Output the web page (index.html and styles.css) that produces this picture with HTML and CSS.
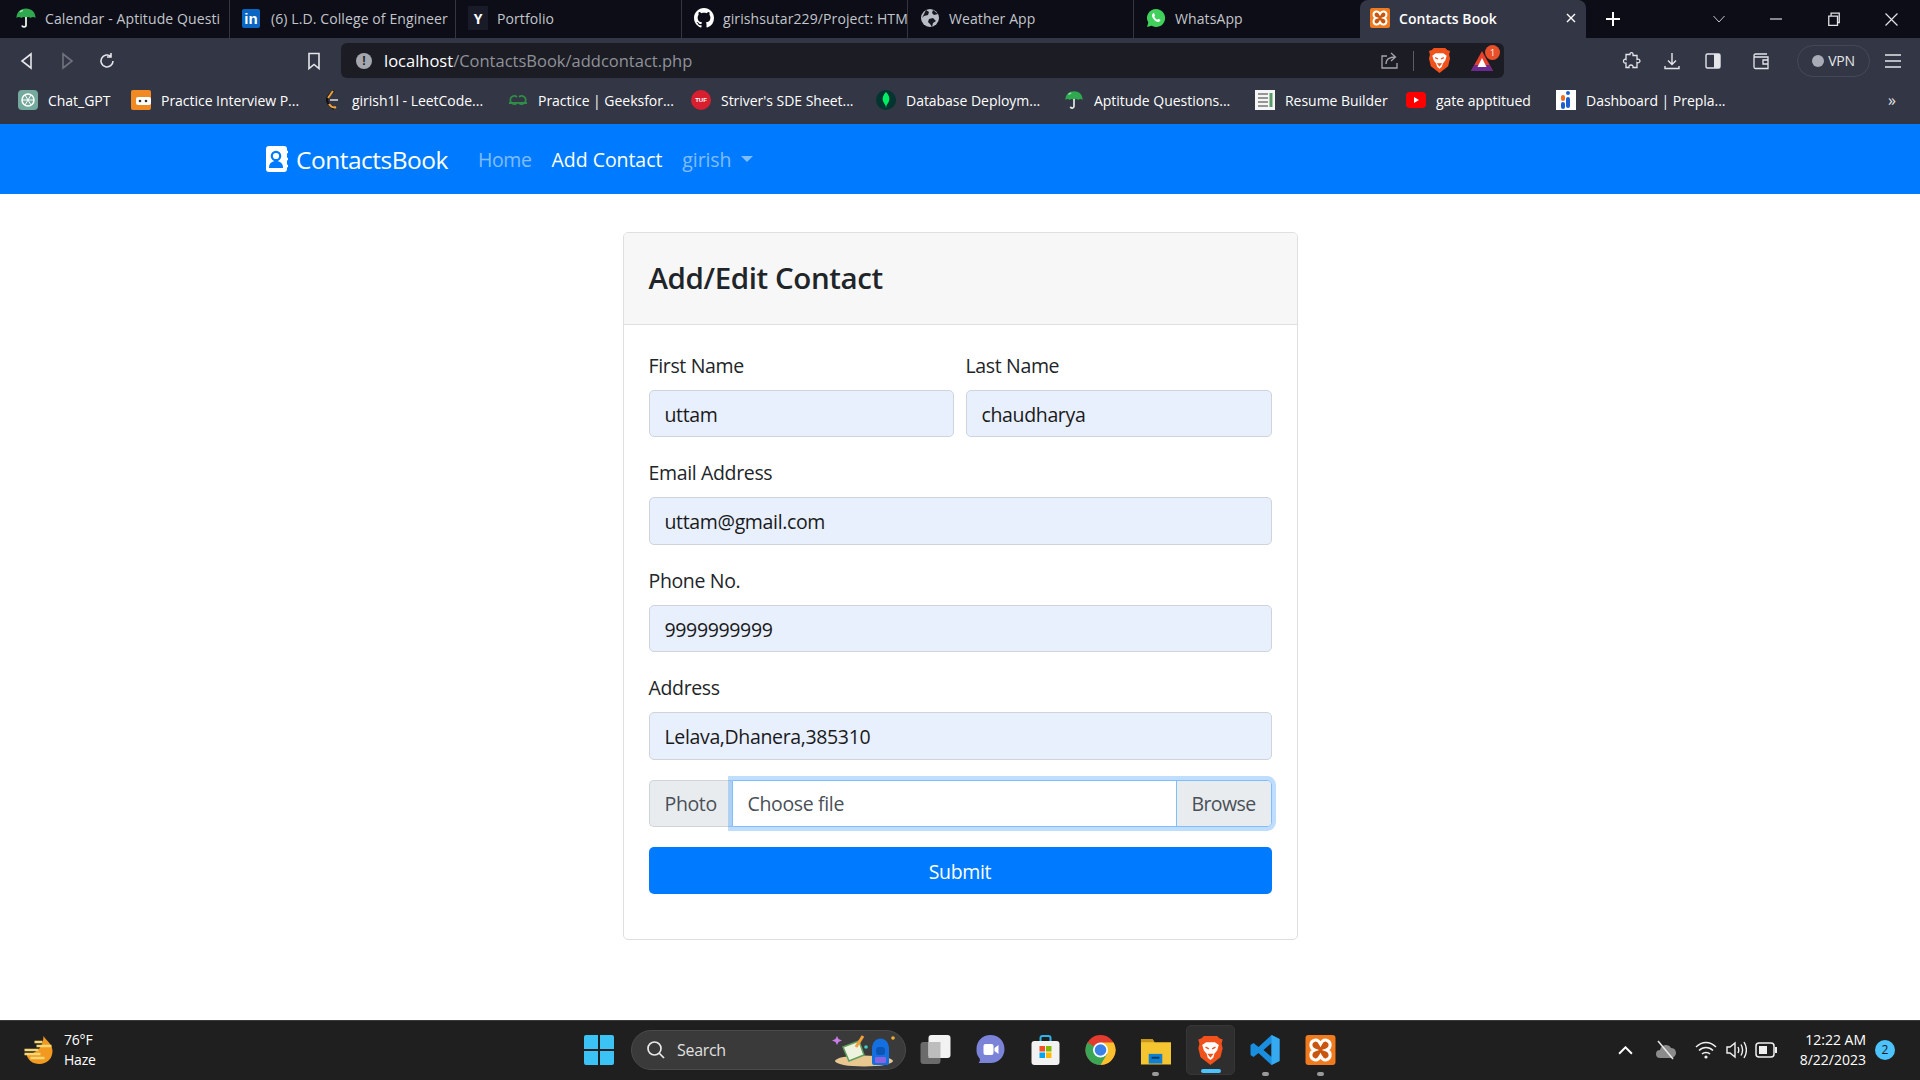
FILE: index.html
```html
<!DOCTYPE html>
<html lang="en">
<head>
<meta charset="utf-8">
<title>Contacts Book</title>
<link rel="stylesheet" href="styles.css">
</head>
<body>
<svg class="defs" aria-hidden="true">
  <symbol id="umbrella" viewBox="0 0 20 22"><path d="M.5 11C.5 5 4.500 1.500 10 1.500S19.500 5 19.500 11c-1.500-1.500-3.500-1.500-4.800 0-1.300-1.500-3.300-1.500-4.700 0-1.400-1.500-3.400-1.500-4.700 0-1.300-1.500-3.300-1.500-4.800 0z" fill="#2fa84f"/><path d="M4 5c1-1 2-1.500 3-1.500" fill="none" stroke="#a8e6b4" stroke-width="1.500"/><path d="M10 10v8c0 2.500-3.500 2.500-4 .5" fill="none" stroke="#e6f2e6" stroke-width="1.800"/></symbol>
  <symbol id="xampp" viewBox="0 0 20 20"><rect width="20" height="20" rx="2" fill="#f07a1e"/><path d="M6 3.500c2-.5 3 .5 4 2.500 1-2 2-3 4-2.500 3.500 1 3 5.500 0 6.500 3 1 3.500 5.500 0 6.500-2 .5-3-.5-4-2.500-1 2-2 3-4 2.500-3.500-1-3-5.500 0-6.500-3-1-3.500-5.500 0-6.500z" fill="#c9560f" stroke="#fff" stroke-width="2"/></symbol>
  <symbol id="brave" viewBox="0 0 24 28"><path d="M6 1h12l2 2 3 1-1 4 1 4-2 8-9 7-9-7-2-8 1-4-1-4 3-1z" fill="#f1511b"/><path d="M4.500 9L8 6.500h8L19.500 9 18 14l-2.500 3-1 3.500-2.500 2-2.500-2-1-3.500L6 14z" fill="#fff"/><path d="M7.500 11l3 1.500M16.500 11l-3 1.500M10.500 17.500h3l-1.500 2z" fill="#f1511b" stroke="#f1511b" stroke-width="1.300"/></symbol>
</svg>

<div class="tabbar">
  <div class="tab sep"><svg class="ticon"><use href="#umbrella"/></svg><span class="ttext">Calendar - Aptitude Questi</span></div>
  <div class="tab sep"><span class="linkedin">in</span><span class="ttext">(6) L.D. College of Engineer</span></div>
  <div class="tab sep"><span class="ylogo">Y</span><span class="ttext">Portfolio</span></div>
  <div class="tab sep"><svg class="ticon" viewBox="0 0 16 16"><path fill="#fff" d="M8 0C3.58 0 0 3.58 0 8c0 3.54 2.29 6.53 5.47 7.59.4.07.55-.17.55-.38 0-.19-.01-.82-.01-1.49-2.01.37-2.53-.49-2.69-.94-.09-.23-.48-.94-.82-1.13-.28-.15-.68-.52-.01-.53.63-.01 1.08.58 1.23.82.72 1.21 1.87.87 2.33.66.07-.52.28-.87.51-1.07-1.78-.2-3.64-.89-3.64-3.95 0-.87.31-1.59.82-2.15-.08-.2-.36-1.02.08-2.12 0 0 .67-.21 2.2.82.64-.18 1.32-.27 2-.27s1.36.09 2 .27c1.53-1.04 2.2-.82 2.2-.82.44 1.1.16 1.92.08 2.12.51.56.82 1.27.82 2.15 0 3.07-1.87 3.75-3.65 3.95.29.25.54.73.54 1.48 0 1.07-.01 1.93-.01 2.2 0 .21.15.46.55.38A8.01 8.01 0 0 0 16 8c0-4.42-3.58-8-8-8z"/></svg><span class="ttext">girishsutar229/Project: HTM</span></div>
  <div class="tab sep"><svg class="ticon" viewBox="0 0 20 20"><circle cx="10" cy="10" r="9" fill="#b8bcc4"/><path d="M6 2l3 2-1 3-4 1-2 2M12 19l1-4 3-2-3-3-4 1-1 3 2 2zM13 2l-1 3 2 2 4-1" fill="#16171f"/></svg><span class="ttext">Weather App</span></div>
  <div class="tab"><svg class="ticon wa" viewBox="0 0 20 20"><path d="M10 1a9 9 0 0 0-7.700 13.600L1 19l4.600-1.200A9 9 0 1 0 10 1z" fill="#3fd15c"/><path d="M7 5.500c-1.500 1-1.500 3 .5 5.500s4.500 3.500 6 2.500c1-.7 1-1.500.8-1.800l-2-1-1 1c-1-.3-2.700-2-3-3l.8-1-1-2.500c-.4-.3-.8-.3-1.100-.2z" fill="#fff"/></svg><span class="ttext">WhatsApp</span></div>
  <div class="tab active"><svg class="ticon"><use href="#xampp"/></svg><span class="ttext">Contacts Book</span><svg class="tclose" viewBox="0 0 10 10"><path d="M1 1l8 8M9 1l-8 8" stroke="#fff" stroke-width="1.400"/></svg></div>
  <svg class="newtab" viewBox="0 0 14 14"><path d="M7 0v14M0 7h14" stroke="#fff" stroke-width="2"/></svg>
  <div class="winctl">
    <svg class="wc-a" viewBox="0 0 12 8"><path d="M.5 1L6 7l5.500-6" fill="none" stroke="#c5c7cd"/></svg>
    <svg class="wc-b" viewBox="0 0 12 2"><path d="M0 1h12" stroke="#d8d9dd" stroke-width="1.200"/></svg>
    <svg class="wc-c" viewBox="0 0 12 12"><path d="M1.500 3.500h7.500v8H1.500zM3.500 3.500V1h7v8H9" fill="none" stroke="#e2e3e6" stroke-width="1.100"/></svg>
    <svg class="wc-d" viewBox="0 0 12 12"><path d="M.5.5l11 11M11.500.5l-11 11" stroke="#e2e3e6" stroke-width="1.100"/></svg>
  </div>
</div>

<div class="toolbar">
  <div class="navbtns">
    <svg class="tb" viewBox="0 0 20 20"><path d="M14 3L5 10l9 7z" fill="none" stroke="#e5e6ea" stroke-width="1.600"/></svg>
    <svg class="tb" viewBox="0 0 20 20"><path d="M6 3l9 7-9 7z" fill="none" stroke="#70737e" stroke-width="1.600"/></svg>
    <svg class="tb" viewBox="0 0 20 20"><path d="M16 10a6 6 0 1 1-2-4.500M14 2v4h-4" fill="none" stroke="#e5e6ea" stroke-width="1.600"/></svg>
    <svg class="tb bookmark" viewBox="0 0 20 20"><path d="M5 2.500h10v15l-5-4-5 4z" fill="none" stroke="#e5e6ea" stroke-width="1.600"/></svg>
  </div>
  <div class="urlbar">
    <span class="urlinfo">!</span>
    <span class="url"><b>localhost</b>/ContactsBook/addcontact.php</span>
    <svg class="tb share" viewBox="0 0 20 20"><path d="M7 5H2v12h15v-5M6 13c0-5 4-7 9-7M11 2l4.500 4L11 10" fill="none" stroke="#a3a5ac" stroke-width="1.300"/></svg>
    <span class="urldiv"></span>
    <svg class="lion"><use href="#brave"/></svg>
    <span class="rewards"><svg viewBox="0 0 24 24"><path d="M12 2L23 22H1z" fill="#e8402a"/><path d="M1 22l3.500-6h15l3.500 6z" fill="#6a2a92"/><path d="M12 9l4.500 9h-9z" fill="#fff"/></svg><i class="rbadge">1</i></span>
  </div>
  <div class="tools">
    <svg class="tb" viewBox="0 0 20 20"><path d="M8 2.500c1-1.500 3-1 3 .5v1.500h4v4c2-1 3 .5 3 1.500s-1.500 2.500-3 1.500v5H11c.5-2-1-2.500-2-2.500s-2.500.5-2 2.500H4v-4.500c-2 .5-2.500-1-2.500-2s1-2.500 2.500-1.500v-5h4z" fill="none" stroke="#e5e6ea" stroke-width="1.300"/></svg>
    <svg class="tb" viewBox="0 0 20 20"><path d="M10 2v11M6 9.500l4 4 4-4M3 15v2.500h14V15" fill="none" stroke="#e5e6ea" stroke-width="1.400"/></svg>
    <svg class="tb" viewBox="0 0 20 20"><rect x="3" y="3" width="14" height="14" rx="1.500" fill="none" stroke="#e5e6ea" stroke-width="1.400"/><rect x="11" y="3" width="6" height="14" fill="#e5e6ea"/></svg>
    <svg class="tb wallet" viewBox="0 0 20 20"><path d="M3 5.500V16a1.500 1.500 0 0 0 1.500 1.500H17V6H4.500A1.500 1.500 0 0 1 3 4.500 1.500 1.500 0 0 1 4.500 3H16M17 9h-5v4h5" fill="none" stroke="#e5e6ea" stroke-width="1.300"/></svg>
    <span class="vpn"><i class="vpndot"></i>VPN</span>
    <svg class="tb menu" viewBox="0 0 20 20"><path d="M2 4h16M2 10h16M2 16h16" stroke="#e5e6ea" stroke-width="1.600"/></svg>
  </div>
</div>

<div class="bookmarks">
  <div class="bm"><svg class="bicon" viewBox="0 0 20 20"><rect width="20" height="20" rx="4" fill="#74aa9c"/><circle cx="10" cy="10" r="6" fill="none" stroke="#fff" stroke-width="1.500"/><path d="M7 5l6 10M13 5L7 15M4 10h12" stroke="#fff" stroke-width="1"/></svg><span>Chat_GPT</span></div>
  <div class="bm"><svg class="bicon" viewBox="0 0 20 20"><rect width="20" height="20" rx="2" fill="#f28a24"/><rect x="5" y="7" width="15" height="8" rx="2" fill="#fff"/><circle cx="9" cy="11" r="1.300" fill="#333"/><circle cx="15" cy="11" r="1.300" fill="#333"/></svg><span>Practice Interview P...</span></div>
  <div class="bm"><svg class="bicon" viewBox="0 0 20 20"><path d="M12 1C8 4 5 7 5 10s3 6 7 9" fill="none" stroke="#111" stroke-width="2.200"/><path d="M7 14c2 3 5 4 7 3" fill="none" stroke="#f2a23a" stroke-width="2.200"/><path d="M11 1L6 8" stroke="#f2a23a" stroke-width="2"/><path d="M8 10h8" stroke="#b3b3b3" stroke-width="2"/></svg><span>girish1l - LeetCode...</span></div>
  <div class="bm"><svg class="bicon" viewBox="0 0 20 20"><path d="M9 7a4 4 0 1 0 0 6H1M11 7a4 4 0 1 1 0 6h8" fill="none" stroke="#2f8d46" stroke-width="1.800"/></svg><span>Practice | Geeksfor...</span></div>
  <div class="bm"><span class="tuf">TUF</span><span>Striver's SDE Sheet...</span></div>
  <div class="bm"><svg class="bicon" viewBox="0 0 20 20"><circle cx="10" cy="10" r="10" fill="#023430"/><path d="M10 2c3 3 4 6 3 9-.5 2-2 3-2.500 4.500L10 18l-.5-2.500C9 14 7.500 13 7 11c-1-3 0-6 3-9z" fill="#00ed64"/></svg><span>Database Deploym...</span></div>
  <div class="bm"><svg class="bicon"><use href="#umbrella"/></svg><span>Aptitude Questions...</span></div>
  <div class="bm"><svg class="bicon" viewBox="0 0 20 20"><rect width="20" height="20" fill="#f5f5f5"/><path d="M3 4h10M3 8h10M3 12h10M3 16h10" stroke="#777" stroke-width="1.500"/><path d="M16 3v14" stroke="#5a9a6a" stroke-width="3"/></svg><span>Resume Builder</span></div>
  <div class="bm"><svg class="bicon" viewBox="0 0 20 20"><rect y="2" width="20" height="16" rx="4" fill="#f00"/><path d="M8 7l5 3-5 3z" fill="#fff"/></svg><span>gate apptitued</span></div>
  <div class="bm"><svg class="bicon" viewBox="0 0 20 20"><rect width="20" height="20" fill="#fff"/><circle cx="12" cy="3" r="2" fill="#1d5fd0"/><rect x="10" y="7" width="4" height="11" rx="2" fill="#1d5fd0"/><rect x="5" y="5" width="4" height="6" rx="2" fill="#f26a1b"/><rect x="5" y="12" width="4" height="7" rx="2" fill="#1d5fd0"/></svg><span>Dashboard | Prepla...</span></div>
  <span class="bmore">»</span>
</div>

<main class="page">
  <nav class="navbar">
    <a class="brand"><svg class="brandicon" viewBox="0 0 22 26"><rect width="21" height="26" rx="3" fill="#fff"/><circle cx="10" cy="10" r="4.200" fill="none" stroke="#007bff" stroke-width="2.200"/><path d="M3 22c0-5 3-7 7-7s7 2 7 7z" fill="#007bff"/><path d="M20 6h2M20 13h2M20 20h2" stroke="#fff" stroke-width="2.500"/></svg>ContactsBook</a>
    <a class="link">Home</a>
    <a class="link on">Add Contact</a>
    <a class="link drop">girish<i class="caret"></i></a>
  </nav>
  <section class="content">
    <div class="card">
      <div class="cardhead"><h3>Add/Edit Contact</h3></div>
      <form class="cardbody">
        <div class="row">
          <div class="group"><label for="fn">First Name</label><input id="fn" value="uttam"></div>
          <div class="group"><label for="ln">Last Name</label><input id="ln" value="chaudharya"></div>
        </div>
        <div class="group"><label for="em">Email Address</label><input id="em" value="uttam@gmail.com"></div>
        <div class="group"><label for="ph">Phone No.</label><input id="ph" value="9999999999"></div>
        <div class="group"><label for="ad">Address</label><input id="ad" value="Lelava,Dhanera,385310"></div>
        <div class="filegroup">
          <span class="prepend">Photo</span>
          <div class="filebox"><span class="filename">Choose file</span><span class="browse">Browse</span></div>
        </div>
        <button type="button" class="submit">Submit</button>
      </form>
    </div>
  </section>
</main>

<footer class="taskbar">
  <div class="weather">
    <svg class="wicon" viewBox="0 0 30 28"><path d="M19 0c3 5 9 8 9 15 0 8-6 13-13 13S3 24 2 18c8 1 17-6 17-18z" fill="#f29a1f"/><path d="M10 6h8M12 10h15M14 14H0M16 18H0M6 22h14" stroke="#f7d774" stroke-width="2.600"/></svg>
    <div class="wtext"><span>76°F</span><span>Haze</span></div>
  </div>
  <div class="center">
    <svg class="winlogo" viewBox="0 0 30 30"><path d="M0 2a2 2 0 0 1 2-2h12v14H0zM16 0h12a2 2 0 0 1 2 2v12H16zM0 16h14v14H2a2 2 0 0 1-2-2zM16 16h14v12a2 2 0 0 1-2 2H16z" fill="#3cc3f5"/></svg>
    <div class="search">
      <svg class="sicon" viewBox="0 0 20 20"><circle cx="8.500" cy="8.500" r="6.500" fill="none" stroke="#e8e8e8" stroke-width="1.700"/><path d="M13 13l5 5" stroke="#e8e8e8" stroke-width="1.700"/></svg>
      <span class="stext">Search</span>
      <svg class="sdeco" viewBox="0 0 60 34"><path d="M3 3l1.500 3L8 7.500 4.500 9 3 12 1.500 9-2 7.500 1.500 6z" fill="#c77ce8"/><ellipse cx="30" cy="28" rx="29" ry="5.500" fill="#e8c88f"/><path d="M9 14l16-6 5 14-15 6z" fill="#eef3df" stroke="#5fa060" stroke-width="1.500"/><path d="M29 3l-7 11" stroke="#f2a03a" stroke-width="3"/><path d="M38 16c0-14 17-14 17 0v14a2 2 0 0 1-2 2H40a2 2 0 0 1-2-2z" fill="#1470e0"/><rect x="41" y="24" width="11" height="6" rx="1" fill="#8a64e0"/><rect x="42" y="14" width="9" height="8" rx="3" fill="#0c55b5"/><circle cx="32" cy="14" r="1.800" fill="#3bd0c8"/><circle cx="59" cy="5" r="1.800" fill="#f2b233"/></svg>
    </div>
    <div class="slots">
      <div class="slot"><svg class="ti" viewBox="0 0 30 30"><rect y="7" width="20" height="22" rx="3" fill="#6b6b6b"/><rect x="8" y="0" width="22" height="23" rx="3" fill="#f2f2f2"/><rect x="8" y="7" width="12" height="16" fill="#bdbdbd"/></svg></div>
      <div class="slot"><svg class="ti" viewBox="0 0 30 30"><path d="M15 0c8 0 14 6 14 14s-6 14-14 14H3c2-2 2-4 0-6-2-3-2-5-2-8C1 6 7 0 15 0z" fill="#7b83d8"/><rect x="8" y="9" width="10" height="11" rx="2" fill="#fff"/><path d="M19 13l4-3v9l-4-3z" fill="#fff"/></svg></div>
      <div class="slot"><svg class="ti" viewBox="0 0 30 30"><path d="M10 6V3a2 2 0 0 1 2-2h6a2 2 0 0 1 2 2v3" fill="none" stroke="#2cb4e8" stroke-width="2"/><rect x="1" y="6" width="28" height="24" rx="3" fill="#f2f2f2"/><rect x="9" y="11" width="5.500" height="5.500" fill="#f25022"/><rect x="15.500" y="11" width="5.500" height="5.500" fill="#7fba00"/><rect x="9" y="17.500" width="5.500" height="5.500" fill="#00a4ef"/><rect x="15.500" y="17.500" width="5.500" height="5.500" fill="#ffb900"/></svg></div>
      <div class="slot"><svg class="ti" viewBox="0 0 30 30"><circle cx="15" cy="15" r="15" fill="#e33b2e"/><path d="M15 30A15 15 0 0 0 28 7.500H15z" fill="#fbc02d"/><path d="M2 7.500A15 15 0 0 0 15 30l6.500-11z" fill="#3aa655"/><circle cx="15" cy="15" r="7.500" fill="#fff"/><circle cx="15" cy="15" r="5.800" fill="#3b82e8"/></svg></div>
      <div class="slot dotted"><svg class="ti" viewBox="0 0 32 30"><path d="M1 4h12l2 3h17v23H1z" fill="#f4c531"/><path d="M1 4h12l2 3H1z" fill="#c9961a"/><rect x="9" y="19" width="14" height="10" fill="#0f7fd1"/><rect x="12" y="22" width="8" height="2" fill="#073a66"/></svg></div>
      <div class="slot"><div class="activeslot"><svg class="lionbar"><use href="#brave"/></svg><i class="runbar"></i></div></div>
      <div class="slot dotted"><svg class="ti" viewBox="0 0 30 30"><path d="M21 0l8 4v22l-8 4L8 18l-5 4-3-2v-10l3-2 5 4z" fill="#1b8fdf"/><path d="M21 8l-8 7 8 7z" fill="#1f1f1f"/><path d="M21 0l8 4v22l-8 4z" fill="#36aaf0"/></svg></div>
      <div class="slot dotted"><svg class="ti"><use href="#xampp"/></svg></div>
    </div>
  </div>
  <div class="tray">
    <svg class="ty chev" viewBox="0 0 14 8"><path d="M1 7l6-6 6 6" fill="none" stroke="#fff" stroke-width="1.800"/></svg>
    <svg class="ty cloud" viewBox="0 0 22 20"><path d="M5 18a4 4 0 0 1 0-8c1-5 8-7 11-2 4 0 5 3 5 5s-2 5-5 5z" fill="#8b8b8b"/><path d="M3 1l15 18" stroke="#e8e8e8" stroke-width="1.500"/></svg>
    <svg class="ty wifi" viewBox="0 0 22 20"><path d="M1 7c6-6 14-6 20 0M4 10.500c4-4 10-4 14 0M7 14c2-2 6-2 8 0" fill="none" stroke="#f0f0f0" stroke-width="1.500"/><circle cx="11" cy="17" r="1.600" fill="#f0f0f0"/></svg>
    <svg class="ty vol" viewBox="0 0 22 20"><path d="M2 7h3l5-4v14l-5-4H2z" fill="none" stroke="#f0f0f0" stroke-width="1.400"/><path d="M13 7c1 2 1 4 0 6M16 4.500c2 3.500 2 7.500 0 11M19 2c3 5 3 11 0 16" fill="none" stroke="#f0f0f0" stroke-width="1.400"/></svg>
    <svg class="ty batt" viewBox="0 0 22 16"><rect x="1" y="1" width="18" height="14" rx="3" fill="none" stroke="#f0f0f0" stroke-width="1.500"/><rect x="4" y="4" width="8" height="8" fill="#f0f0f0"/><rect x="20" y="5" width="2" height="6" fill="#f0f0f0"/></svg>
    <div class="clock"><span>12:22 AM</span><span>8/22/2023</span></div>
    <span class="notif">2</span>
  </div>
</footer>
</body>
</html>
```
FILE: styles.css
```css
* { box-sizing: border-box; }
html, body { margin: 0; height: 100%; }
body { width: 1920px; height: 1080px; overflow: hidden; display: flex; flex-direction: column; font-family: "Open Sans", "Noto Sans", sans-serif; background: #fff; }
.defs { width: 0; height: 0; position: absolute; }

/* tab strip */
.tabbar { height: 38px; background: #0c0d17; display: flex; align-items: stretch; padding-left: 4px; flex: none; }
.tab { width: 226px; display: flex; align-items: center; padding: 0 0 2px 12px; color: #c3c5cb; font-size: 14px; letter-spacing: .1px; flex: none; overflow: hidden; }
.tab.sep { border-right: 1px solid #33353f; }
.ticon { width: 20px; height: 22px; flex: none; margin-right: 9px; }
.ttext { white-space: nowrap; flex: 1; }
.tab.active { background: #333644; color: #fff; border-radius: 8px 8px 0 0; font-weight: 600; padding-left: 10px; letter-spacing: .05px; }
.tclose { width: 10px; height: 10px; flex: none; margin: 0 10px 0 0; }
.linkedin { width: 18px; height: 19px; background: #0a66c2; color: #fff; font: 700 15px "Liberation Sans", sans-serif; letter-spacing: 0; display: flex; align-items: center; justify-content: center; border-radius: 2px; margin-right: 11px; flex: none; }
.ylogo { width: 20px; height: 24px; background: #1a1b29; color: #fff; font: 700 14px "Open Sans", sans-serif; letter-spacing: 0; display: flex; align-items: center; justify-content: center; margin-right: 9px; flex: none; }
.newtab { width: 14px; height: 14px; align-self: center; margin-left: 20px; flex: none; }
.winctl { display: flex; align-items: center; flex: 1; padding-left: 93px; }
.wc-a { width: 12px; height: 8px; }
.wc-b { width: 12px; height: 2px; margin-left: 45px; }
.wc-c { width: 14px; height: 14px; margin-left: 45px; }
.wc-d { width: 13px; height: 13px; margin-left: 44px; }

/* toolbar */
.toolbar { height: 42px; background: #333644; display: flex; align-items: center; flex: none; padding: 3px 0 0 17px; }
.tb { width: 20px; height: 20px; flex: none; }
.navbtns { display: flex; gap: 20px; width: 324px; align-items: center; }
.bookmark { margin-left: 167px; }
.urlbar { width: 1163px; height: 35px; background: #1c1d24; border-radius: 6px; display: flex; align-items: center; padding-left: 15px; flex: none; }
.urlinfo { width: 16px; height: 16px; border-radius: 50%; background: #a5a7ae; color: #1c1d24; font: 700 12px/16px "Liberation Sans", sans-serif; text-align: center; flex: none; }
.url { margin-left: 12px; width: 989px; flex: none; font-size: 16.500px; color: #8f929b; white-space: nowrap; }
.url b { color: #fff; font-weight: 400; }
.share { margin-left: 7px; }
.urldiv { width: 1px; height: 20px; background: #5a5c66; margin-left: 13px; }
.lion { width: 23px; height: 27px; margin-left: 14px; flex: none; }
.rewards { width: 24px; height: 24px; margin-left: 19px; position: relative; flex: none; }
.rewards svg { width: 24px; height: 24px; display: block; }
.rbadge { position: absolute; top: -4px; right: -6px; width: 15px; height: 15px; border-radius: 50%; background: #e8502a; color: #fff; font: 400 9px/15px "Open Sans", sans-serif; text-align: center; }
.tools { display: flex; align-items: center; padding-left: 118px; }
.tools .tb:nth-child(2) { margin-left: 20px; }
.tools .tb:nth-child(3) { margin-left: 21px; }
.wallet { margin-left: 28px; }
.vpn { width: 73px; height: 32px; margin-left: 26px; border: 1px solid #464955; border-radius: 16px; display: flex; align-items: center; justify-content: center; gap: 4px; color: #e5e6ea; font-size: 14px; letter-spacing: -.3px; }
.vpndot { width: 12px; height: 12px; border-radius: 50%; background: #a9acb6; }
.menu { margin-left: 13px; }

/* bookmarks */
.bookmarks { height: 44px; background: #333644; flex: none; display: grid; grid-template-columns: 113px 191px 186px 183px 185px 188px 191px 151px 150px 332px 1fr; padding: 0 0 4px 18px; align-items: center; color: #fff; font-size: 14px; letter-spacing: -.03px; }
.bm { display: flex; align-items: center; gap: 10px; white-space: nowrap; }
.bicon { width: 20px; height: 20px; flex: none; }
.tuf { width: 20px; height: 20px; border-radius: 50%; background: #d81f2f; color: #fff; font: 700 6px/20px "Liberation Sans", sans-serif; text-align: center; flex: none; }
.bmore { font-size: 16px; color: #e5e6ea; }

/* page */
.page { flex: 1; min-height: 0; display: flex; flex-direction: column; }
.navbar { height: 70px; flex: none; background: #007bff; display: flex; align-items: center; padding-left: 266px; font-size: 19.500px; letter-spacing: -.35px; }
.brand { display: flex; align-items: center; color: #fff; font-size: 24.500px; letter-spacing: -.5px; margin-right: 30px; }
.brandicon { width: 22px; height: 26px; margin-right: 8px; }
.link { color: rgba(255,255,255,.5); margin-right: 20px; }
.link.on { color: #fff; font-weight: 500; letter-spacing: -.05px; }
.drop { display: flex; align-items: center; letter-spacing: -.1px; }
.caret { width: 0; height: 0; border-left: 6px solid transparent; border-right: 6px solid transparent; border-top: 6px solid rgba(255,255,255,.5); margin-left: 10px; }

.content { flex: 1; display: flex; justify-content: center; padding-top: 37.500px; }
.card { width: 675px; height: 708.500px; border: 1px solid #dfdfdf; border-radius: 5px; overflow: hidden; }
.cardhead { height: 92px; background: #f7f7f7; border-bottom: 1px solid #dfdfdf; display: flex; align-items: center; padding: 0 25px 2px; }
.cardhead h3 { margin: 0; font-size: 29.500px; font-weight: 600; color: #212529; letter-spacing: -.4px; }
.cardbody { padding: 25px; display: flex; flex-direction: column; color: #212529; font-size: 19.500px; letter-spacing: -.35px; }
.row { display: grid; grid-template-columns: 305px 306px; gap: 12px; }
.group { display: flex; flex-direction: column; margin-bottom: 20px; }
.group label { line-height: 30px; padding-top: 1px; height: 30px; margin-bottom: 10px; }
.group input { height: 47.500px; border: 1px solid #ced4da; border-radius: 5px; background: #e8f0fe; padding: 2px 15px 0; font: inherit; letter-spacing: inherit; color: #1a1a1a; width: 100%; outline: none; }
.filegroup { display: flex; height: 47.500px; margin-bottom: 20px; color: #495057; }
.prepend { width: 83px; background: #e9ecef; border: 1px solid #ced4da; border-right: 0; border-radius: 5px 0 0 5px; display: flex; align-items: center; padding-left: 15px; }
.filebox { flex: 1; display: flex; justify-content: space-between; border: 1px solid #80bdff; border-radius: 0 5px 5px 0; box-shadow: 0 0 0 4px rgba(0,123,255,.25); background: #fff; }
.filename { display: flex; align-items: center; padding-left: 15px; }
.browse { width: 95px; background: #e9ecef; border-left: 1px solid #80bdff; display: flex; align-items: center; justify-content: center; border-radius: 0 4px 4px 0; letter-spacing: -.6px; }
.submit { height: 47px; padding: 2px 0 0; background: #007bff; border: 0; border-radius: 5px; color: #fff; font: inherit; letter-spacing: inherit; }

/* taskbar */
.taskbar { height: 60px; flex: none; background: #1f1f1f; border-top: 1px solid #3a3a3a; display: flex; align-items: center; color: #fff; padding-bottom: 1px; }
.weather { width: 571px; display: flex; align-items: center; padding-left: 24px; gap: 9px; flex: none; }
.wicon { width: 31px; height: 28px; flex: none; }
.wtext { display: flex; flex-direction: column; font-size: 14px; line-height: 20px; letter-spacing: -.2px; }
.center { display: flex; align-items: center; flex: none; }
.winlogo { width: 30px; height: 30px; margin: 0 17px 0 13px; flex: none; }
.search { width: 275px; height: 40px; border-radius: 20px; background: #3a3a3a; border: 1px solid #4a4a4a; display: flex; align-items: center; padding-left: 14px; flex: none; }
.sicon { width: 20px; height: 20px; flex: none; }
.stext { margin-left: 11px; font-size: 16px; letter-spacing: -.3px; color: #e0e0e0; width: 152px; }
.sdeco { width: 60px; height: 34px; margin-left: 5px; overflow: visible; }
.slots { display: flex; margin-left: 2px; }
.slot { width: 55px; height: 50px; display: flex; align-items: center; justify-content: center; position: relative; }
.ti { width: 31px; height: 30px; }
.dotted::after { content: ""; position: absolute; left: 24px; bottom: -1px; width: 7px; height: 4px; border-radius: 2px; background: #9a9a9a; }
.activeslot { width: 49px; height: 50px; border-radius: 5px; background: #2e2e2e; border: 1px solid #363636; display: flex; align-items: center; justify-content: center; position: relative; }
.lionbar { width: 27px; height: 31px; }
.runbar { position: absolute; left: 14px; bottom: 1px; width: 20px; height: 4px; border-radius: 2px; background: #4cc2ff; }
.tray { flex: 1; display: flex; align-items: center; padding-left: 270px; }
.ty { flex: none; }
.chev { width: 15px; height: 9px; }
.cloud { width: 22px; height: 20px; margin-left: 22px; }
.wifi { width: 22px; height: 20px; margin-left: 18px; }
.vol { width: 22px; height: 20px; margin-left: 8px; }
.batt { width: 22px; height: 16px; margin-left: 8px; }
.clock { width: 78px; margin-left: 11px; display: flex; flex-direction: column; align-items: flex-end; font-size: 14px; line-height: 20px; flex: none; }
.notif { width: 20px; height: 20px; border-radius: 50%; background: #4cc2ff; color: #1a1a1a; font-size: 12px; line-height: 20px; text-align: center; margin-left: 9px; flex: none; }
```
